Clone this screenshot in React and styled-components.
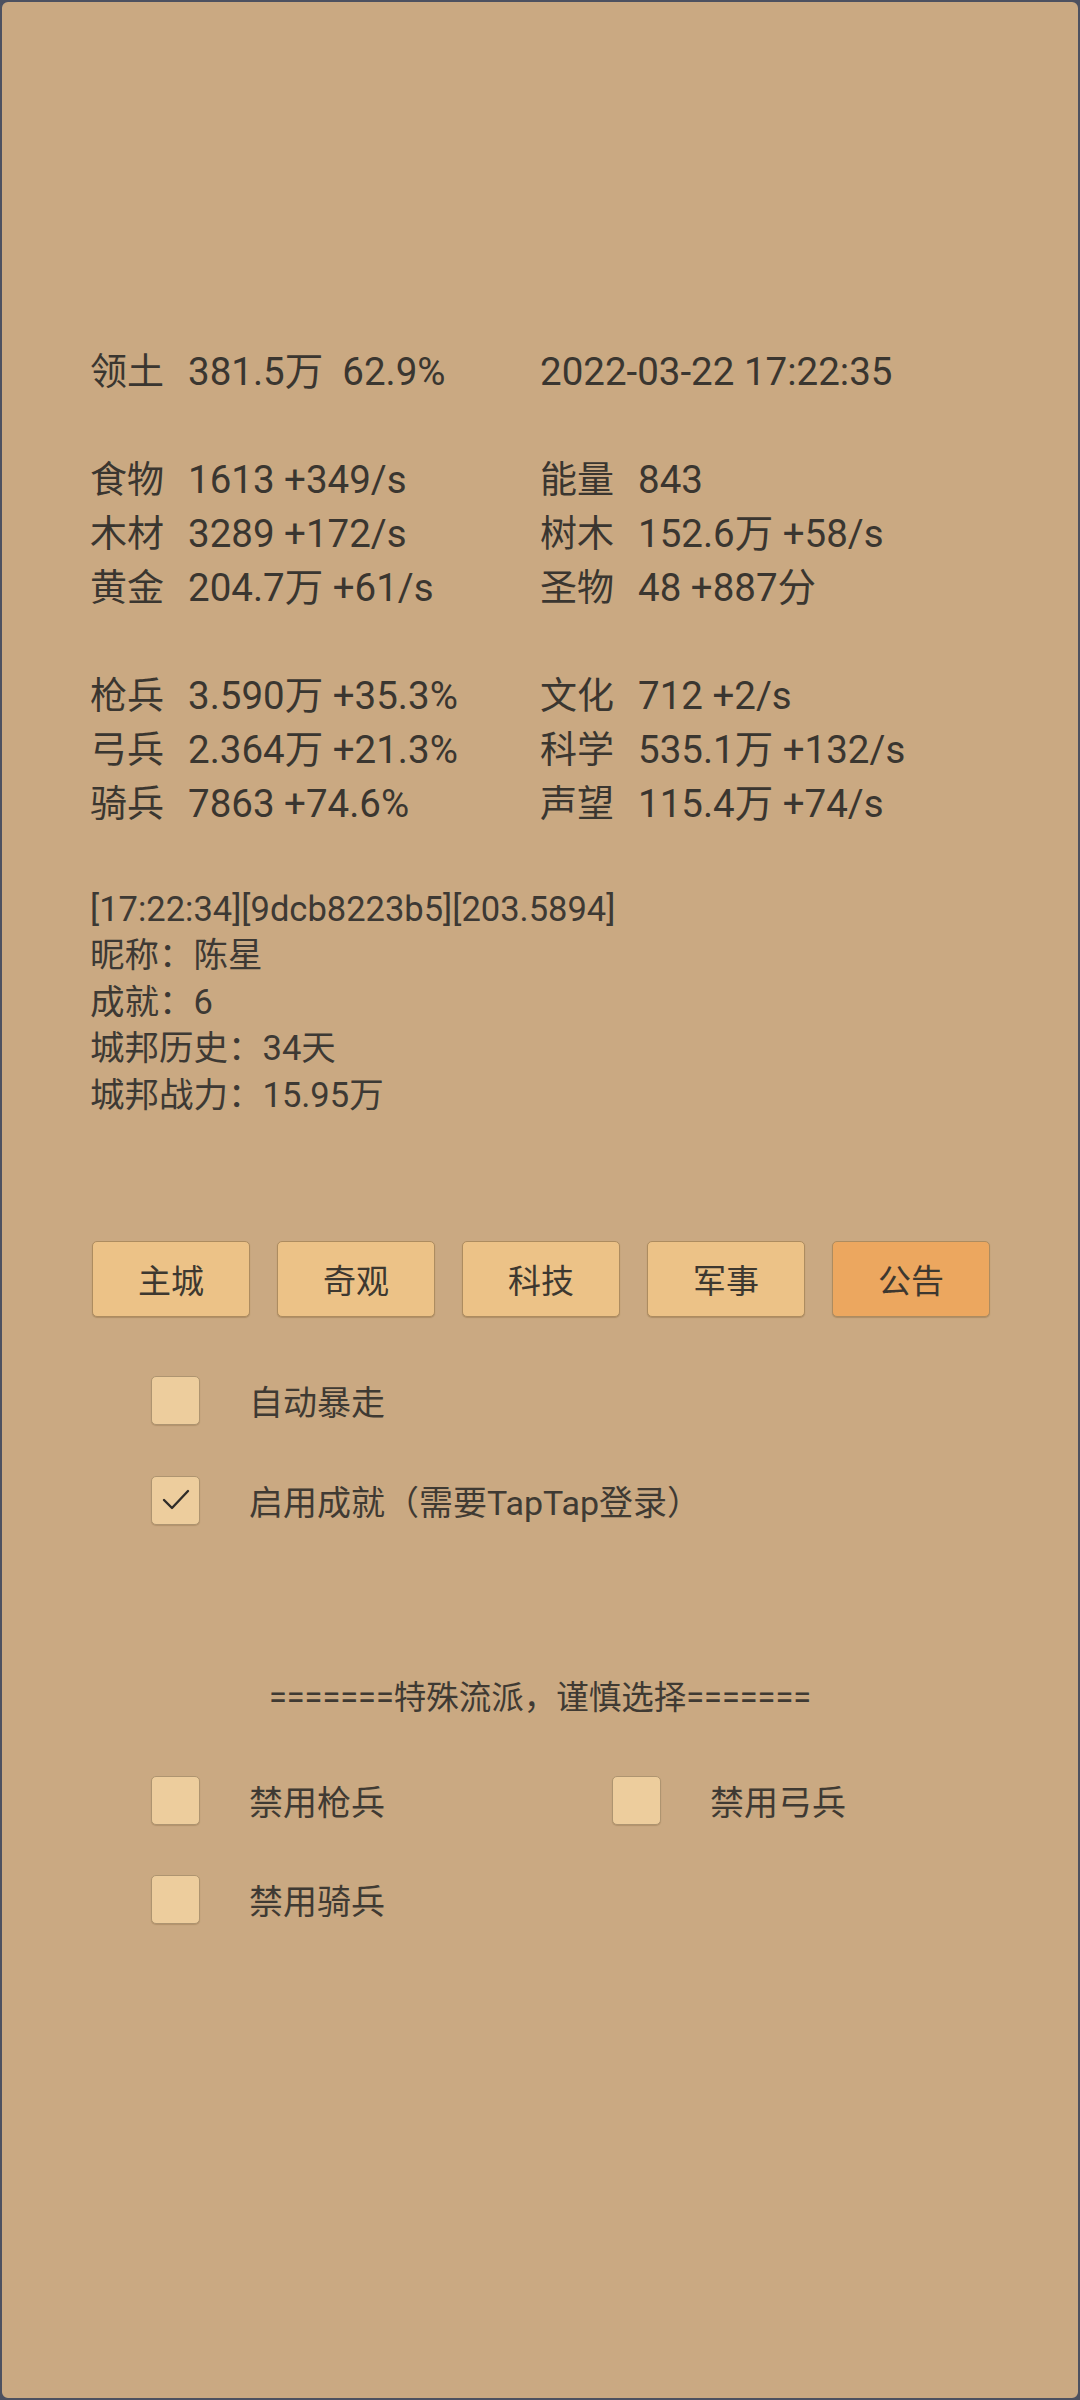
import React from "react";
import styled, { createGlobalStyle } from "styled-components";

const Global = createGlobalStyle`
  html, body { margin: 0; padding: 0; background: #4d5160; }
  * { box-sizing: border-box; }
`;

const Frame = styled.div`
  width: 1080px;
  height: 2400px;
  background: #caa982;
  border: 2px solid #4d5160;
  border-radius: 8px;
  padding-top: 343px;
  color: #3a3630;
  font-family: Roboto, "Noto Sans CJK SC", sans-serif;
  overflow: hidden;
`;

const Stats = styled.div`
  display: grid;
  grid-template-columns: 450px 1fr;
  padding-left: 88px;
  font-size: 38.5px;
  line-height: 54px;
`;

const Stat = styled.div`
  display: flex;
  align-items: baseline;
  white-space: pre;
  height: 54px;
`;

const Label = styled.span`
  width: 98px;
  flex: none;
  font-size: 37px;
`;

const Blank = styled.div`
  grid-column: 1 / -1;
  height: 54px;
`;

const Log = styled.div`
  margin-top: 55px;
  padding-left: 88px;
  font-size: 34.5px;
  line-height: 46.4px;
  color: #3d3934;
`;

const Buttons = styled.div`
  display: flex;
  gap: 27px;
  padding-left: 90px;
  margin-top: 123px;
`;

const Tab = styled.div`
  width: 158px;
  height: 76px;
  display: flex;
  align-items: center;
  justify-content: center;
  font-size: 33px;
  color: #3d3830;
  background: ${(p) => (p.$active ? "#eca75f" : "#ecc287")};
  border: 1.5px solid #ad8c60;
  border-radius: 5px;
  box-shadow: 0 1px 1px rgba(90, 60, 20, 0.25);
`;

const Options = styled.div`
  margin-top: ${(p) => p.$top || 0}px;
  padding-left: 149px;
`;

const Row = styled.div`
  display: grid;
  grid-template-columns: ${(p) => (p.$cols === 2 ? "461px 1fr" : "1fr")};
  height: ${(p) => p.$h || 100}px;
  align-items: center;
`;

const Option = styled.div`
  display: flex;
  align-items: center;
  gap: 49px;
  font-size: 34px;
  color: #3f3a33;
`;

const Box = styled.div`
  width: 49px;
  height: 49px;
  flex: none;
  background: #edcd9d;
  border: 1.5px solid #ae9470;
  border-radius: 5px;
  box-shadow: 0 1px 1px rgba(90, 60, 20, 0.2);
  display: flex;
  align-items: center;
  justify-content: center;
`;

const Title = styled.div`
  margin-top: 118px;
  margin-bottom: 22px;
  text-align: center;
  font-size: 32.5px;
  line-height: 60px;
  color: #3f3a33;
`;

const Check = () => (
  <svg width="30" height="24" viewBox="0 0 30 24">
    <path d="M3 12 L11 20 L27 3" fill="none" stroke="#2f2c28" strokeWidth="2.4" strokeLinecap="round" strokeLinejoin="round" />
  </svg>
);

const CheckOption = ({ label, checked }) => (
  <Option>
    <Box>{checked && <Check />}</Box>
    <span>{label}</span>
  </Option>
);

const S = ({ l, v }) => (
  <Stat>
    <Label>{l}</Label>
    <span>{v}</span>
  </Stat>
);

export default function App() {
  return (
    <>
      <Global />
      <Frame>
        <Stats>
          <S l="领土" v={"381.5万  62.9%"} />
          <Stat>
            <span>2022-03-22 17:22:35</span>
          </Stat>
          <Blank />
          <S l="食物" v="1613 +349/s" />
          <S l="能量" v="843" />
          <S l="木材" v="3289 +172/s" />
          <S l="树木" v="152.6万 +58/s" />
          <S l="黄金" v="204.7万 +61/s" />
          <S l="圣物" v="48 +887分" />
          <Blank />
          <S l="枪兵" v="3.590万 +35.3%" />
          <S l="文化" v="712 +2/s" />
          <S l="弓兵" v="2.364万 +21.3%" />
          <S l="科学" v="535.1万 +132/s" />
          <S l="骑兵" v="7863 +74.6%" />
          <S l="声望" v="115.4万 +74/s" />
        </Stats>
        <Log>
          <div>[17:22:34][9dcb8223b5][203.5894]</div>
          <div>昵称：陈星</div>
          <div>成就：6</div>
          <div>城邦历史：34天</div>
          <div>城邦战力：15.95万</div>
        </Log>
        <Buttons>
          <Tab>主城</Tab>
          <Tab>奇观</Tab>
          <Tab>科技</Tab>
          <Tab>军事</Tab>
          <Tab $active>公告</Tab>
        </Buttons>
        <Options $top={33}>
          <Row>
            <CheckOption label="自动暴走" />
          </Row>
          <Row>
            <CheckOption label="启用成就（需要TapTap登录）" checked />
          </Row>
        </Options>
        <Title>=======特殊流派，谨慎选择=======</Title>
        <Options>
          <Row $cols={2}>
            <CheckOption label="禁用枪兵" />
            <CheckOption label="禁用弓兵" />
          </Row>
          <Row $h={98}>
            <CheckOption label="禁用骑兵" />
          </Row>
        </Options>
      </Frame>
    </>
  );
}
